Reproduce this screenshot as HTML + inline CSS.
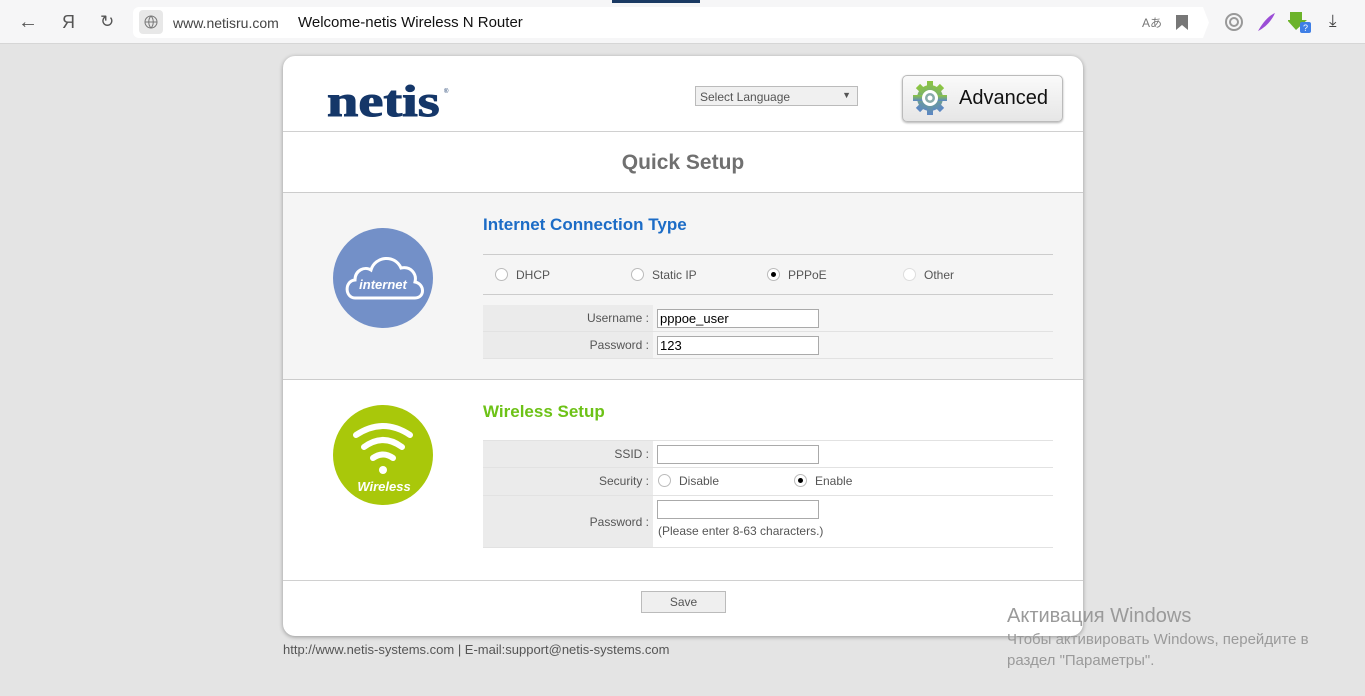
<!DOCTYPE html>
<html><head><meta charset="utf-8"><style>
*{box-sizing:border-box;margin:0;padding:0}
body{width:1365px;height:696px;background:#e4e4e4;font-family:"Liberation Sans",sans-serif;position:relative;overflow:hidden}
.abs{position:absolute}
.top{left:0;top:0;width:1365px;height:44px;background:#f6f6f7;border-bottom:1px solid #d6d6d6}
.url{left:133px;top:7px;width:1070px;height:31px;background:#fff;border-radius:6px 0 0 6px}
.card{left:283px;top:56px;width:800px;height:580px;background:#fff;border-radius:12px;box-shadow:0 1px 4px rgba(0,0,0,.35);overflow:hidden}
.row{position:absolute;left:200px;width:570px;border-bottom:1px solid #e2e2e2}
.rl{position:absolute;left:0;top:0;bottom:0;width:170px;background:#ebebeb;text-align:right;padding-right:4px;font-size:12px;color:#555}
.inp{position:absolute;left:374px;width:162px;height:19px;border:1px solid #aaa;background:#fff;font-size:13px;padding-left:2px;line-height:17px;color:#000}
.radio{position:absolute;width:13px;height:13px;border:1px solid #bbb;border-radius:50%;background:#fff}
.radio.on::after{content:"";position:absolute;left:3px;top:3px;width:5px;height:5px;border-radius:50%;background:#000}
.rt{position:absolute;font-size:12px;color:#555}
</style></head><body>
<div class="abs top"></div>
<div class="abs" style="left:612px;top:0;width:88px;height:3px;background:#1b3a63"></div>
<div class="abs url"></div>
<svg class="abs" style="left:1195px;top:7px" width="14" height="31"><path d="M0 0L8 0L14 15.5L8 31L0 31Z" fill="#fff"/></svg>
<div class="abs" style="left:18px;top:11px;font-size:20px;color:#555">←</div>
<div class="abs" style="left:62px;top:12px;font-size:18px;color:#555">Я</div>
<div class="abs" style="left:100px;top:12px;font-size:17px;color:#555">↻</div>
<div class="abs" style="left:139px;top:10px;width:24px;height:24px;background:#e8e8e8;border-radius:4px"></div>
<svg class="abs" style="left:144px;top:15px" width="14" height="14"><circle cx="7" cy="7" r="6" fill="none" stroke="#777"/><path d="M1 7H13M7 1C4 4 4 10 7 13M7 1C10 4 10 10 7 13" fill="none" stroke="#777"/></svg>
<div class="abs" style="left:173px;top:15px;font-size:14px;color:#444">www.netisru.com</div>
<div class="abs" style="left:298px;top:14px;font-size:15px;color:#111">Welcome-netis Wireless N Router</div>
<div class="abs" style="left:1142px;top:14px;font-size:12px;color:#777">Aあ</div>
<svg class="abs" style="left:1176px;top:15px" width="12" height="15"><path d="M0 0H12V15L6 10L0 15Z" fill="#777"/></svg>
<svg class="abs" style="left:1224px;top:12px" width="20" height="20"><circle cx="10" cy="10" r="8" fill="none" stroke="#999" stroke-width="2"/><circle cx="10" cy="10" r="4" fill="none" stroke="#999" stroke-width="2"/></svg>
<svg class="abs" style="left:1256px;top:12px" width="20" height="20"><path d="M2 19C6 12 12 4 19 1C16 8 10 15 2 19Z" fill="#9b4dd6"/></svg>
<svg class="abs" style="left:1288px;top:10px" width="24" height="24"><path d="M2 2H14V10H19L8 20L-1 10H2Z" fill="#6cb32a"/><rect x="12" y="12" width="11" height="11" rx="2" fill="#3f7fe6"/><text x="15" y="21" font-size="9" fill="#fff" font-family="Liberation Sans">?</text></svg>
<div class="abs" style="left:1329px;top:11px;font-size:17px;color:#444">⤓</div>

<div class="abs card">
  <div class="abs" style="left:44px;top:20px;font-family:'Liberation Serif',serif;font-weight:bold;font-size:44px;color:#153769;transform:scaleX(1.28);transform-origin:0 0;-webkit-text-stroke:1px #153769">netis</div>
  <div class="abs" style="left:161px;top:33px;font-size:6px;color:#153769">®</div>
  <div class="abs" style="left:412px;top:30px;width:163px;height:20px;border:1px solid #bbb;background:#f0f0f0;font-size:12px;color:#555;padding:3px 4px">Select Language<span style="position:absolute;right:6px;top:3px;font-size:9px">▼</span></div>
  <div class="abs" style="left:619px;top:19px;width:161px;height:47px;border:1px solid #bbb;border-radius:5px;background:linear-gradient(#fafafa,#e6e6e6);box-shadow:0 1px 2px rgba(0,0,0,.3)"></div>
  <svg class="abs" style="left:629px;top:24px" width="36" height="36" viewBox="0 0 36 36"><defs><linearGradient id="g" x1="0" y1="0" x2="0" y2="1"><stop offset="0" stop-color="#8cc63f"/><stop offset="1" stop-color="#5b86c6"/></linearGradient></defs><g fill="url(#g)"><circle cx="18" cy="18" r="13"/><rect x="15" y="1" width="6" height="34"/><rect x="1" y="15" width="34" height="6"/><rect x="15" y="1" width="6" height="34" transform="rotate(45 18 18)"/><rect x="15" y="1" width="6" height="34" transform="rotate(-45 18 18)"/></g><circle cx="18" cy="18" r="8" fill="#fff"/><circle cx="18" cy="18" r="5" fill="#8aa"/><circle cx="18" cy="18" r="2.5" fill="#fff"/></svg>
  <div class="abs" style="left:676px;top:31px;font-size:20px;color:#111">Advanced</div>
  <div class="abs" style="left:0;top:75px;width:800px;height:1px;background:#d0d0d0"></div>
  <div class="abs" style="left:0;top:95px;width:800px;text-align:center;font-size:21px;font-weight:bold;color:#707070">Quick Setup</div>
  <div class="abs" style="left:0;top:136px;width:800px;height:188px;background:#f5f5f5;border-top:1px solid #ccc;border-bottom:1px solid #ccc"></div>
  <svg class="abs" style="left:50px;top:172px" width="100" height="100"><circle cx="50" cy="50" r="50" fill="#7390c8"/><path d="M22 70C12 70 11 53 22 52C22 42 32 38 38 42C42 28 62 26 68 40C78 38 84 46 82 54C92 56 92 70 82 70Z" fill="none" stroke="#fff" stroke-width="3"/><text x="50" y="61" text-anchor="middle" font-family="Liberation Sans" font-style="italic" font-weight="bold" font-size="13" fill="#fff">internet</text></svg>
  <div class="abs" style="left:200px;top:159px;font-size:17px;font-weight:bold;color:#1c6cc6">Internet Connection Type</div>
  <div class="abs" style="left:200px;top:198px;width:570px;height:1px;background:#ccc"></div>
  <div class="abs" style="left:200px;top:238px;width:570px;height:1px;background:#ccc"></div>
  <div class="radio" style="left:212px;top:212px"></div><div class="rt" style="left:233px;top:212px">DHCP</div>
  <div class="radio" style="left:348px;top:212px"></div><div class="rt" style="left:369px;top:212px">Static IP</div>
  <div class="radio on" style="left:484px;top:212px"></div><div class="rt" style="left:505px;top:212px">PPPoE</div>
  <div class="radio" style="left:620px;top:212px;border-color:#ddd"></div><div class="rt" style="left:641px;top:212px">Other</div>
  <div class="row" style="top:249px;height:27px"><div class="rl" style="padding-top:6px">Username :</div></div>
  <div class="inp" style="top:253px">pppoe_user</div>
  <div class="row" style="top:276px;height:27px"><div class="rl" style="padding-top:6px">Password :</div></div>
  <div class="inp" style="top:280px">123</div>

  <svg class="abs" style="left:50px;top:349px" width="100" height="100"><circle cx="50" cy="50" r="50" fill="#a9c80a"/><g fill="none" stroke="#fff" stroke-width="6" stroke-linecap="round"><path d="M23 30Q50 12 77 30"/><path d="M31 42Q50 28 69 42"/><path d="M40 53Q50 46 60 53"/></g><circle cx="50" cy="65" r="4" fill="#fff"/><text x="51" y="86" text-anchor="middle" font-family="Liberation Sans" font-style="italic" font-weight="bold" font-size="13" fill="#fff">Wireless</text></svg>
  <div class="abs" style="left:200px;top:346px;font-size:17px;font-weight:bold;color:#6dc217">Wireless Setup</div>
  <div class="abs" style="left:200px;top:384px;width:570px;height:1px;background:#e2e2e2"></div>
  <div class="row" style="top:385px;height:27px"><div class="rl" style="padding-top:6px">SSID :</div></div>
  <div class="inp" style="top:389px"></div>
  <div class="row" style="top:412px;height:28px"><div class="rl" style="padding-top:6px">Security :</div></div>
  <div class="radio" style="left:375px;top:418px"></div><div class="rt" style="left:396px;top:418px">Disable</div>
  <div class="radio on" style="left:511px;top:418px"></div><div class="rt" style="left:532px;top:418px">Enable</div>
  <div class="row" style="top:440px;height:52px"><div class="rl" style="padding-top:19px">Password :</div></div>
  <div class="inp" style="top:444px"></div>
  <div class="rt" style="left:375px;top:468px">(Please enter 8-63 characters.)</div>
  <div class="abs" style="left:0;top:524px;width:800px;height:1px;background:#d0d0d0"></div>
  <div class="abs" style="left:358px;top:535px;width:85px;height:22px;border:1px solid #bbb;background:#efefef;font-size:12px;color:#555;text-align:center;line-height:20px">Save</div>
</div>
<div class="abs" style="left:283px;top:642px;font-size:13px;color:#555">http://www.netis-systems.com | E-mail:support@netis-systems.com</div>
<div class="abs" style="left:1007px;top:605px;font-size:20px;color:#9a9a9a">Активация Windows</div>
<div class="abs" style="left:1007px;top:629px;font-size:15px;color:#9a9a9a;line-height:21px">Чтобы активировать Windows, перейдите в<br>раздел "Параметры".</div>
</body></html>
